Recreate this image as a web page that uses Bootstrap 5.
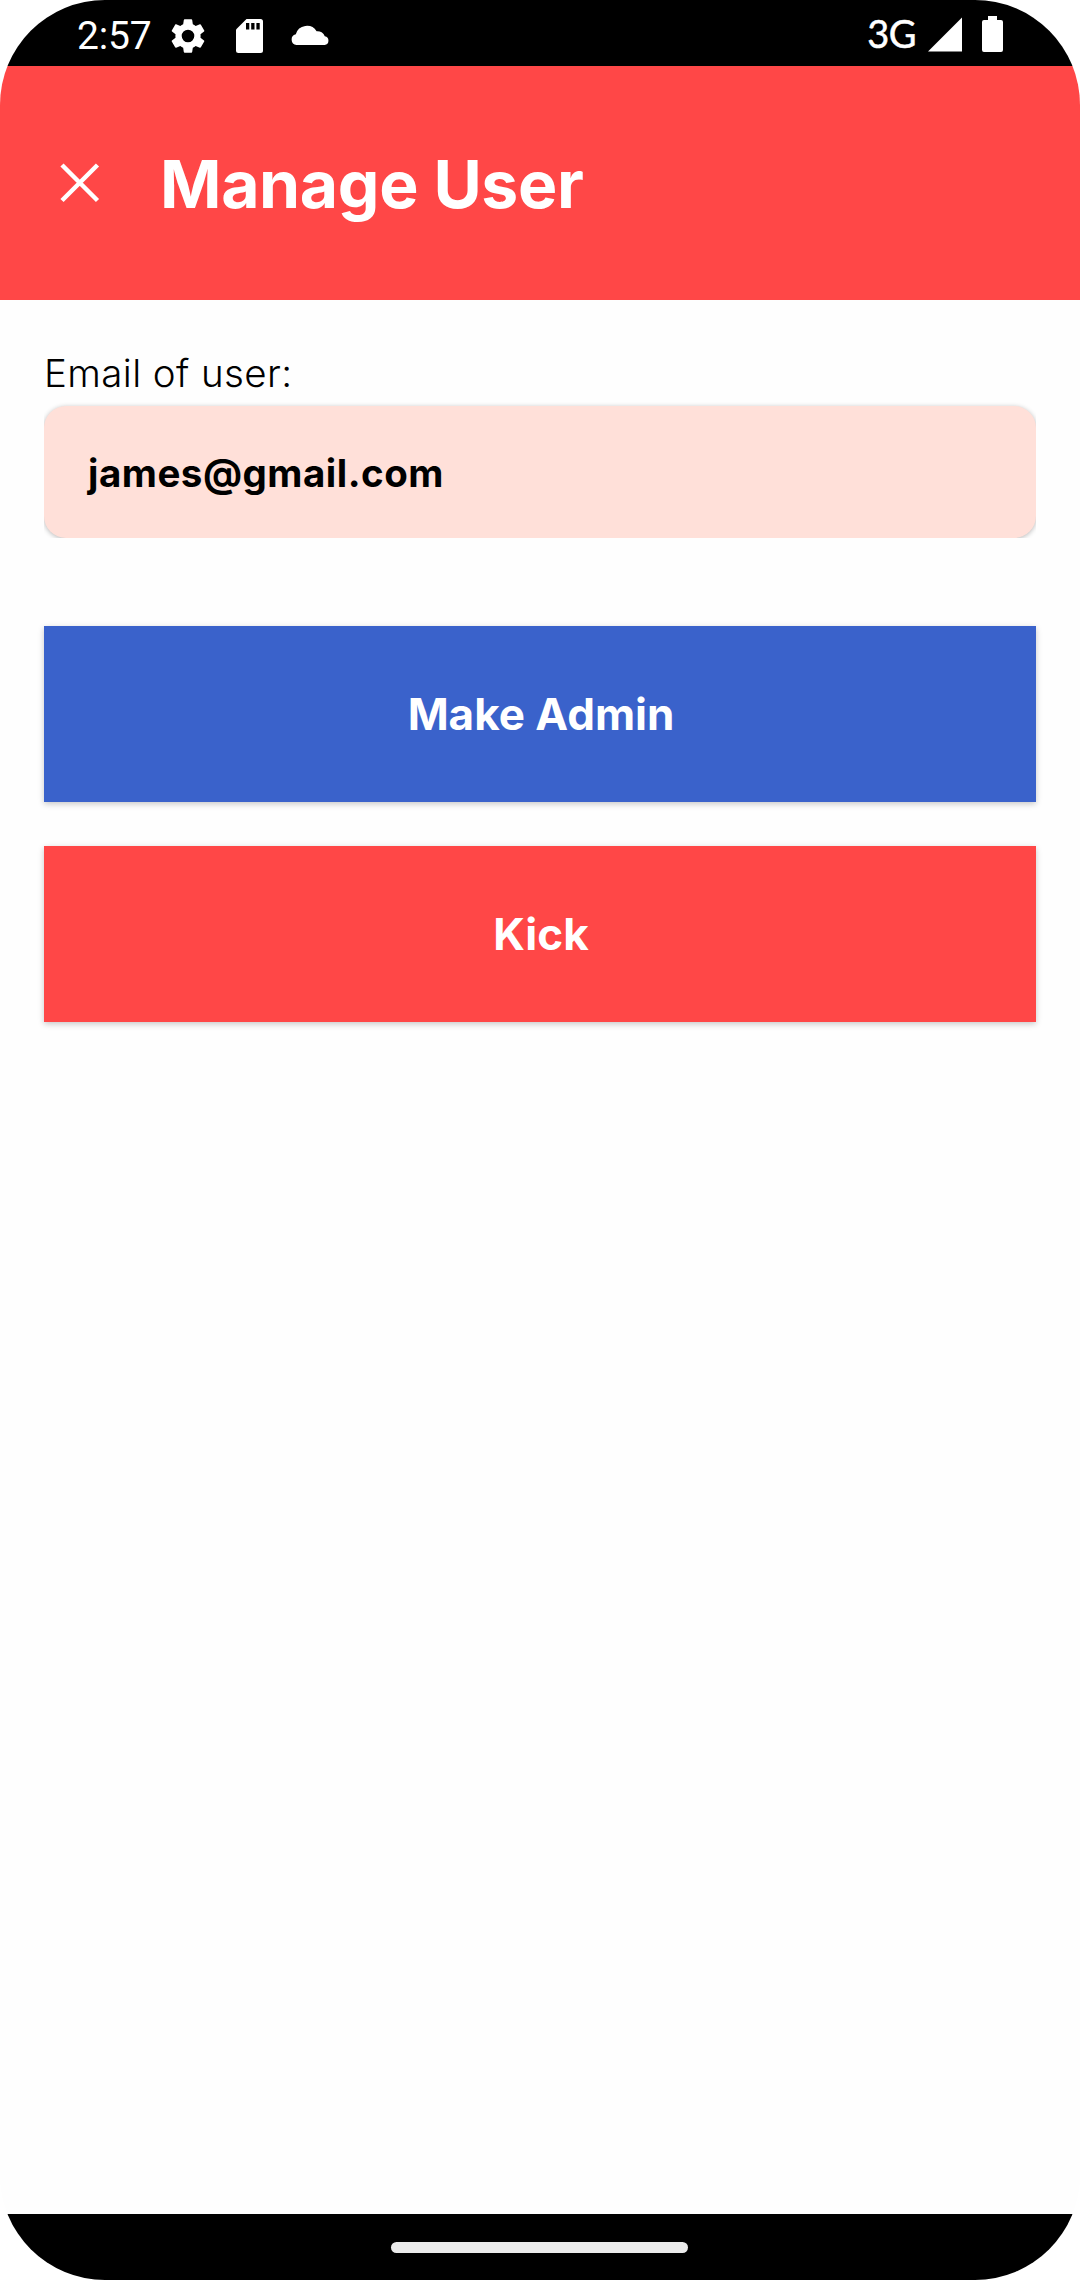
<!DOCTYPE html>
<html lang="en">
<head>
<meta charset="utf-8">
<meta name="viewport" content="width=device-width, initial-scale=1">
<title>Manage User</title>
<link href="https://cdn.jsdelivr.net/npm/bootstrap@5.3.0/dist/css/bootstrap.min.css" rel="stylesheet">
<style>
  body { background: #fff; font-family: Inter, "Open Sans", sans-serif; }
  .phone { width: 1080px; height: 2280px; border-radius: 105px; background: #fefefe; }
  .statusbar { height: 66px; padding: 0 77px; background: #000; }
  .clock { font: 400 39px/66px Roboto, sans-serif; width: 74px; padding-top: 5px; letter-spacing: -.2px; }
  .network { font: 400 38px/66px Lato, sans-serif; -webkit-text-stroke: .5px #fff; letter-spacing: -.5px; margin-right: 1px; }
  .icon-gear { margin: 5px 0 0 16px; }
  .icon-sd { margin: 5px 0 0 27px; }
  .icon-cloud { margin: 2px 0 0 28px; }
  .icon-signal { margin: 3px 0 0 11px; }
  .icon-battery { margin: 2px 0 0 19px; }
  .appbar { height: 234px; padding-left: 60px; background: #ff4747; }
  .appbar h1 { font-size: 66px; line-height: 80px; margin: 2px 0 0 60px; letter-spacing: -.35px; }
  .content { padding: 50px 44px 0; }
  .field-label { font-size: 38.5px; line-height: 46px; font-weight: 300; margin-bottom: 10px; color: #000; letter-spacing: .4px; }
  .email-clip { margin-top: -6px; padding-top: 6px; overflow: hidden; }
  .email-box { height: 132px; padding: 3px 44px 0; border-radius: 22px; background: #ffe0d9; font-size: 38.5px; color: #000; letter-spacing: .5px; box-shadow: 0 1px 5px rgba(0,0,0,.28); }
  .actions { gap: 44px; margin-top: 88px; }
  .action { --bs-btn-color: #fff; --bs-btn-hover-color: #fff; height: 176px; padding: 0 0 0 2px; font-size: 44px; box-shadow: 0 2px 6px rgba(0,0,0,.22); }
  .action-admin, .action-admin:hover { background: #3a62cb; }
  .action-kick, .action-kick:hover { background: #ff4747; }
  .navbar-gesture { height: 66px; padding-right: 1px; background: #000; }
  .pill { width: 297px; height: 11px; border-radius: 6px; background: #ebebeb; }
</style>
<script src="https://cdn.jsdelivr.net/npm/bootstrap@5.3.0/dist/js/bootstrap.bundle.min.js"></script>
</head>
<body>
<div class="phone d-flex flex-column overflow-hidden">
  <div class="statusbar d-flex align-items-center justify-content-between text-white">
    <div class="d-flex align-items-center h-100">
      <span class="clock">2:57</span>
      <svg class="icon-gear" width="42" height="42" viewBox="0 0 24 24" fill="#fff"><path d="M19.14 12.94c.04-.3.06-.61.06-.94 0-.32-.02-.64-.07-.94l2.03-1.58a.49.49 0 0 0 .12-.61l-1.92-3.32a.488.488 0 0 0-.59-.22l-2.39.96c-.5-.38-1.03-.7-1.62-.94l-.36-2.54a.484.484 0 0 0-.48-.41h-3.84c-.24 0-.43.17-.47.41l-.36 2.54c-.59.24-1.13.57-1.62.94l-2.39-.96c-.22-.08-.47 0-.59.22L2.74 8.87c-.12.21-.08.47.12.61l2.03 1.58c-.05.3-.09.63-.09.94s.02.64.07.94l-2.03 1.58a.49.49 0 0 0-.12.61l1.92 3.32c.12.22.37.29.59.22l2.39-.96c.5.38 1.03.7 1.62.94l.36 2.54c.05.24.24.41.48.41h3.84c.24 0 .44-.17.47-.41l.36-2.54c.59-.24 1.13-.56 1.62-.94l2.39.96c.22.08.47 0 .59-.22l1.92-3.32c.12-.22.07-.47-.12-.61zM12 15.6A3.6 3.6 0 1 1 12 8.400a3.6 3.6 0 0 1 0 7.200z"/></svg>
      <svg class="icon-sd" width="27" height="34" viewBox="0 0 27 34"><path fill="#fff" d="M10.500 0H24.500Q27 0 27 2.500V31.500Q27 34 24.500 34H2.500Q0 34 0 31.500V10.500Z"/><path d="M10 4h3.300v6.500H10zm5.200 0h3.300v6.500h-3.300zm5.200 0h3.300v6.500h-3.300z"/></svg>
      <svg class="icon-cloud" width="38" height="21" viewBox="0 0 38 21" fill="#fff"><path d="M5.500 21A5.500 5.500 0 0 1 4.800 10.200 11.500 11.500 0 0 1 25.600 7.200 7.600 7.600 0 0 1 33.800 12.300 4.400 4.400 0 0 1 33.600 21Z"/></svg>
    </div>
    <div class="d-flex align-items-center h-100">
      <span class="network">3G</span>
      <svg class="icon-signal" width="35" height="35" viewBox="0 0 35 35" fill="#fff"><path d="M34 .5V34.500H0Z"/></svg>
      <svg class="icon-battery" width="21" height="36" viewBox="0 0 21 36" fill="#fff"><path d="M6 0h9v4h4q2 0 2 2V34q0 2-2 2H2q-2 0-2-2V6q0-2 2-2h4z"/></svg>
    </div>
  </div>
  <header class="appbar d-flex align-items-center text-white">
    <svg width="40" height="40" viewBox="0 0 40 40" fill="none" stroke="#fff" stroke-width="4.500"><path d="M2 2 37.500 37.500M37.500 2 2 37.500"/></svg>
    <h1 class="fw-bold">Manage User</h1>
  </header>
  <main class="content flex-grow-1">
    <div class="field-label">Email of user:</div>
    <div class="email-clip">
      <div class="email-box d-flex align-items-center fw-bold">james@gmail.com</div>
    </div>
    <div class="actions d-flex flex-column">
      <button type="button" class="btn action action-admin rounded-0 border-0 fw-bold">Make Admin</button>
      <button type="button" class="btn action action-kick rounded-0 border-0 fw-bold">Kick</button>
    </div>
  </main>
  <footer class="navbar-gesture d-flex align-items-center justify-content-center"><div class="pill"></div></footer>
</div>
</body>
</html>
